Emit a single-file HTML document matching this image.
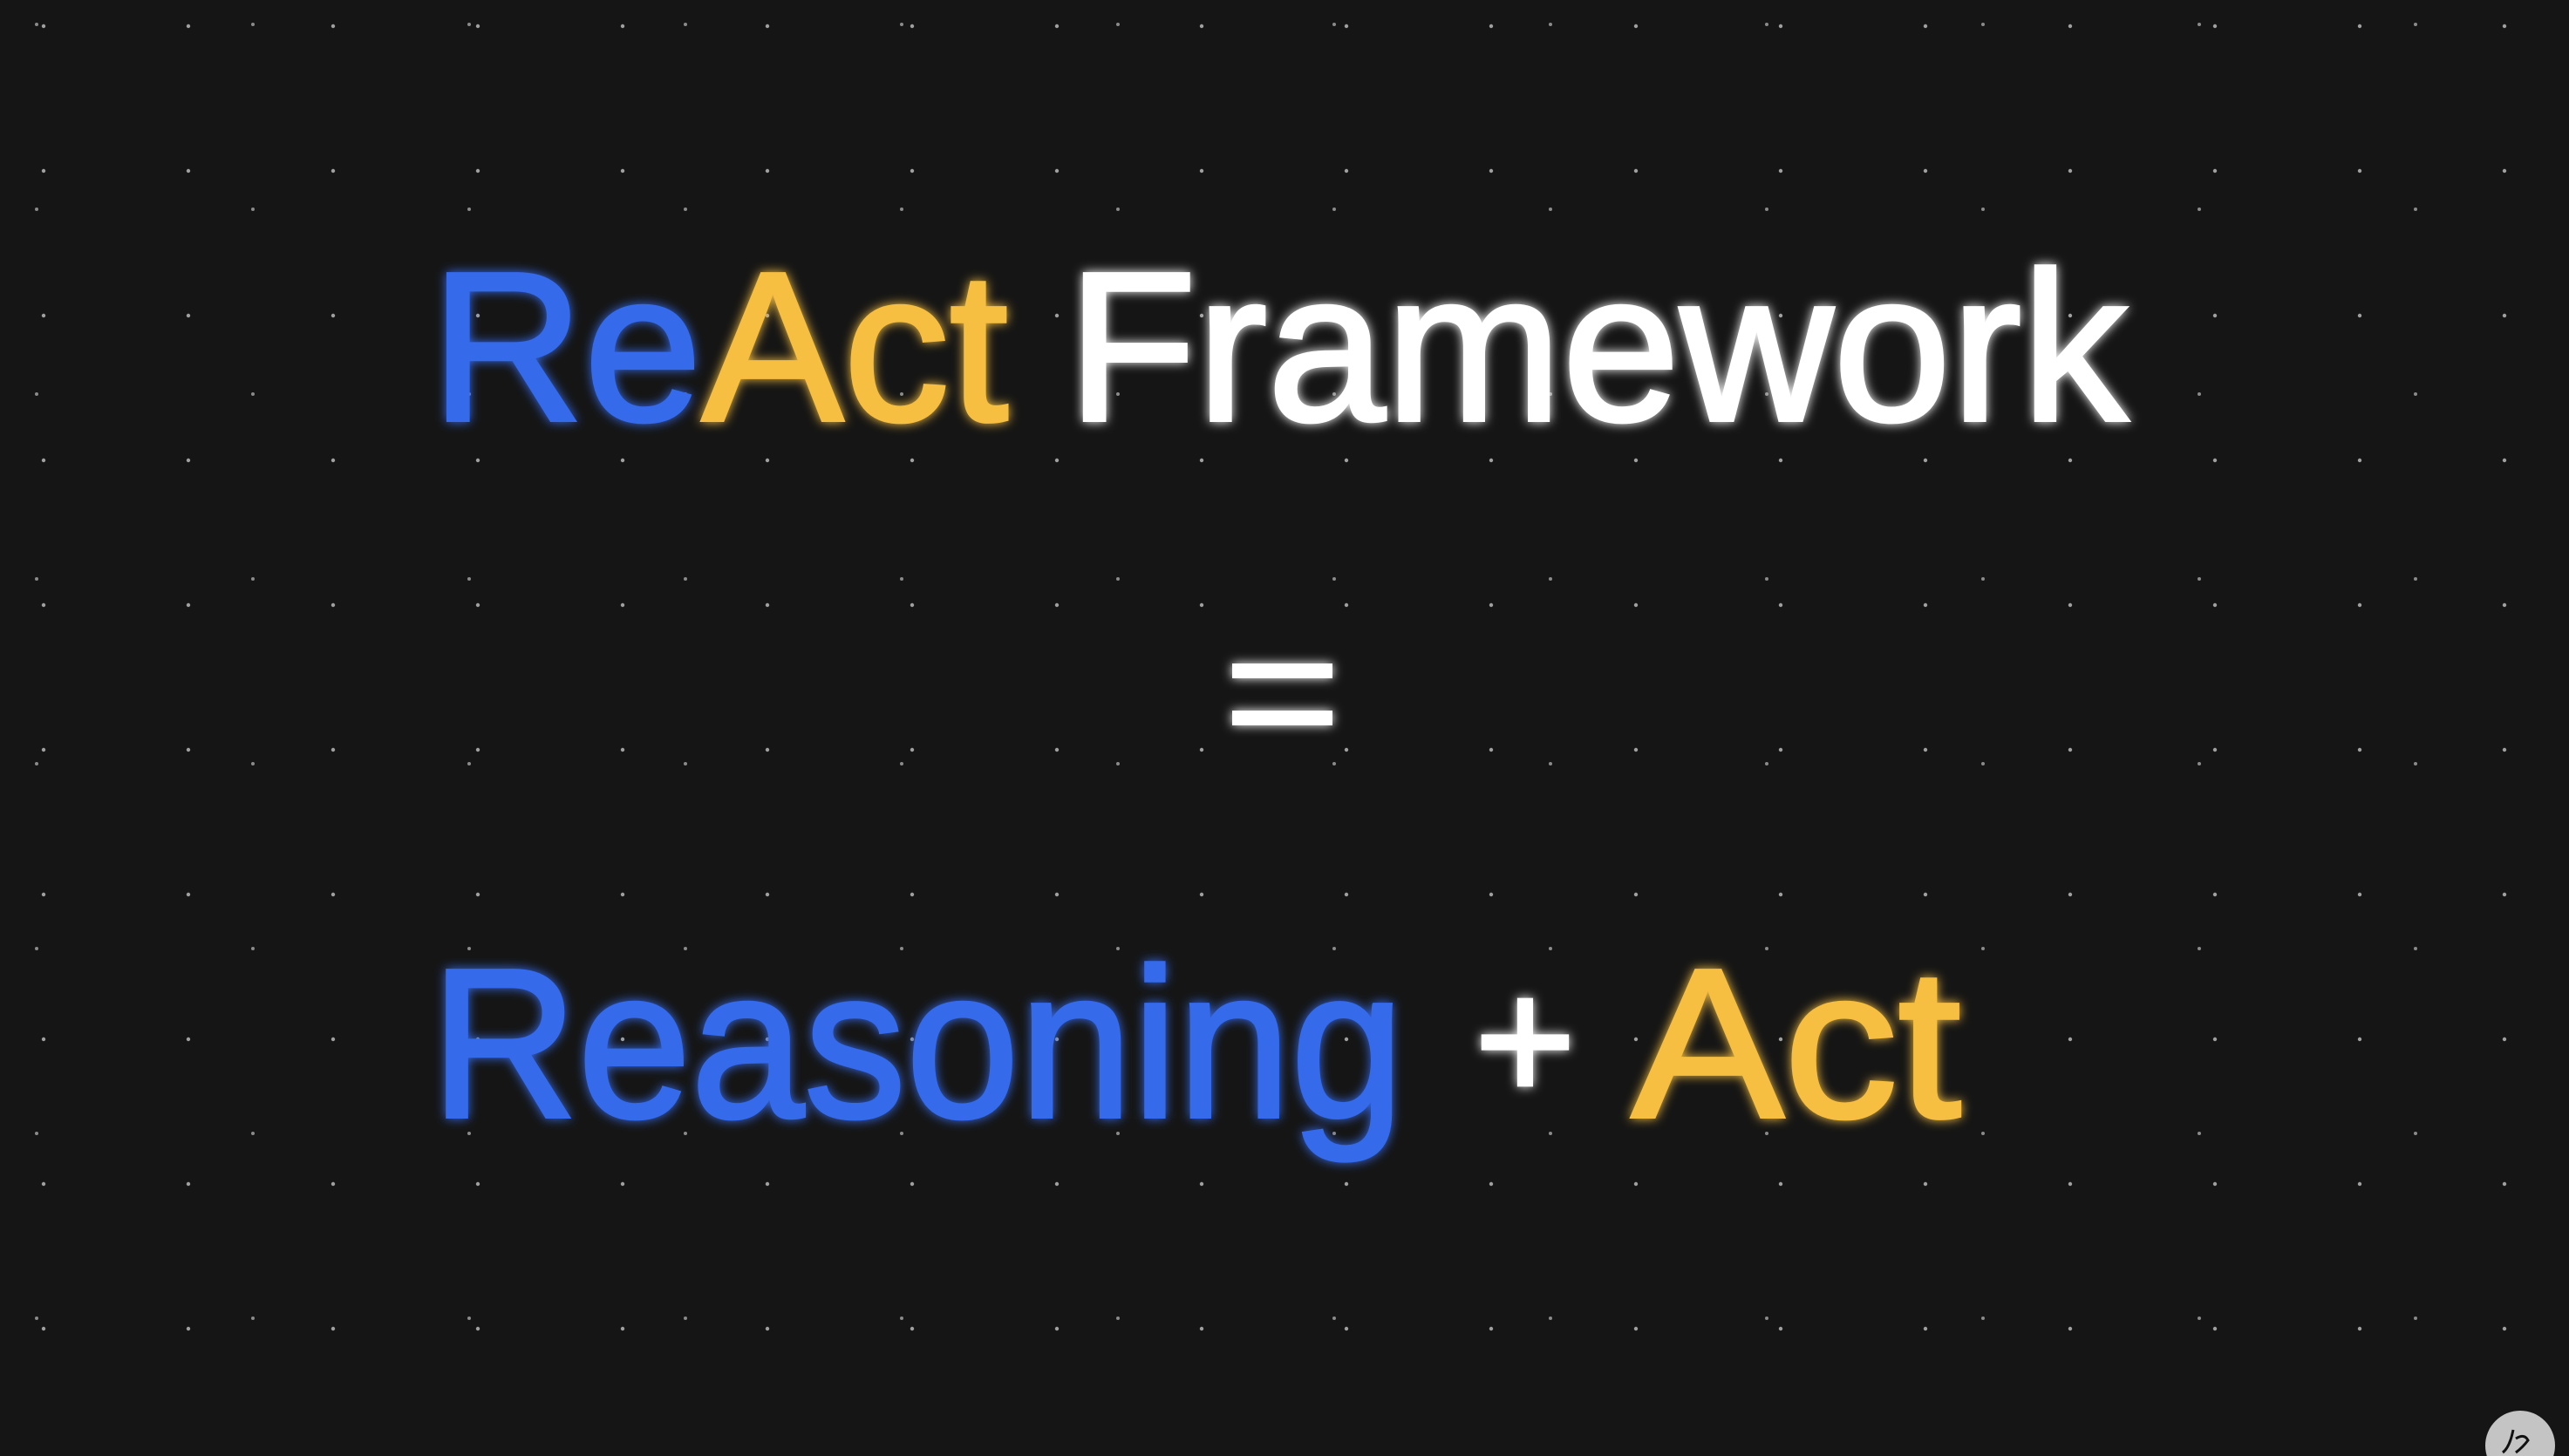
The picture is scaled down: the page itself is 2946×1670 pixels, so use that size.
<!DOCTYPE html>
<html><head><meta charset="utf-8"><style>
html,body{margin:0;padding:0;background:#151515;width:2946px;height:1670px;overflow:hidden}
svg{display:block}
text{font-family:"Liberation Sans",sans-serif;font-weight:400}
</style></head><body>
<svg width="2946" height="1670" viewBox="0 0 2946 1670">
<defs>
<pattern id="d1" width="166" height="166" patternUnits="userSpaceOnUse" x="40" y="20">
<circle cx="10" cy="10" r="2.2" fill="#a0a0a0"/>
</pattern>
<pattern id="d2" width="248" height="212" patternUnits="userSpaceOnUse" x="120" y="90">
<circle cx="170" cy="150" r="2" fill="#8a8a8a"/>
</pattern>
<filter id="g" x="-10%" y="-30%" width="120%" height="160%">
<feGaussianBlur stdDeviation="6" result="b"/>
<feMerge><feMergeNode in="b"/><feMergeNode in="SourceGraphic"/></feMerge>
</filter>
</defs>
<rect width="2946" height="1670" fill="#151515"/>
<rect width="2946" height="1670" fill="url(#d1)"/>
<rect width="2946" height="1670" fill="url(#d2)"/>
<g filter="url(#g)" stroke-width="4">
<text x="494" y="482" font-size="244" textLength="1946" lengthAdjust="spacingAndGlyphs"><tspan fill="#356bea" stroke="#356bea">Re</tspan><tspan fill="#f6bf42" stroke="#f6bf42">Act</tspan><tspan fill="#ffffff" stroke="#ffffff"> Framework</tspan></text>
<rect x="1413" y="761" width="115" height="17" fill="#fff"/>
<rect x="1413" y="815" width="115" height="17" fill="#fff"/>
<text x="494" y="1281" font-size="244" textLength="1116" lengthAdjust="spacingAndGlyphs" fill="#356bea" stroke="#356bea">Reasoning</text>
<text x="1691" y="1262" font-size="200" textLength="116" lengthAdjust="spacingAndGlyphs" fill="#fff" stroke="#fff">+</text>
<text x="1871" y="1281" font-size="244" textLength="378" lengthAdjust="spacingAndGlyphs" fill="#f6bf42" stroke="#f6bf42">Act</text>
</g>
<circle cx="2890" cy="1658" r="40" fill="#c4c4c4"/>
<path d="M2882 1640 q-4 20 -12 26 M2885 1650 q10 -6 14 2 q-6 8 -14 14" stroke="#111" stroke-width="3" fill="none"/>
</svg>
</body></html>
